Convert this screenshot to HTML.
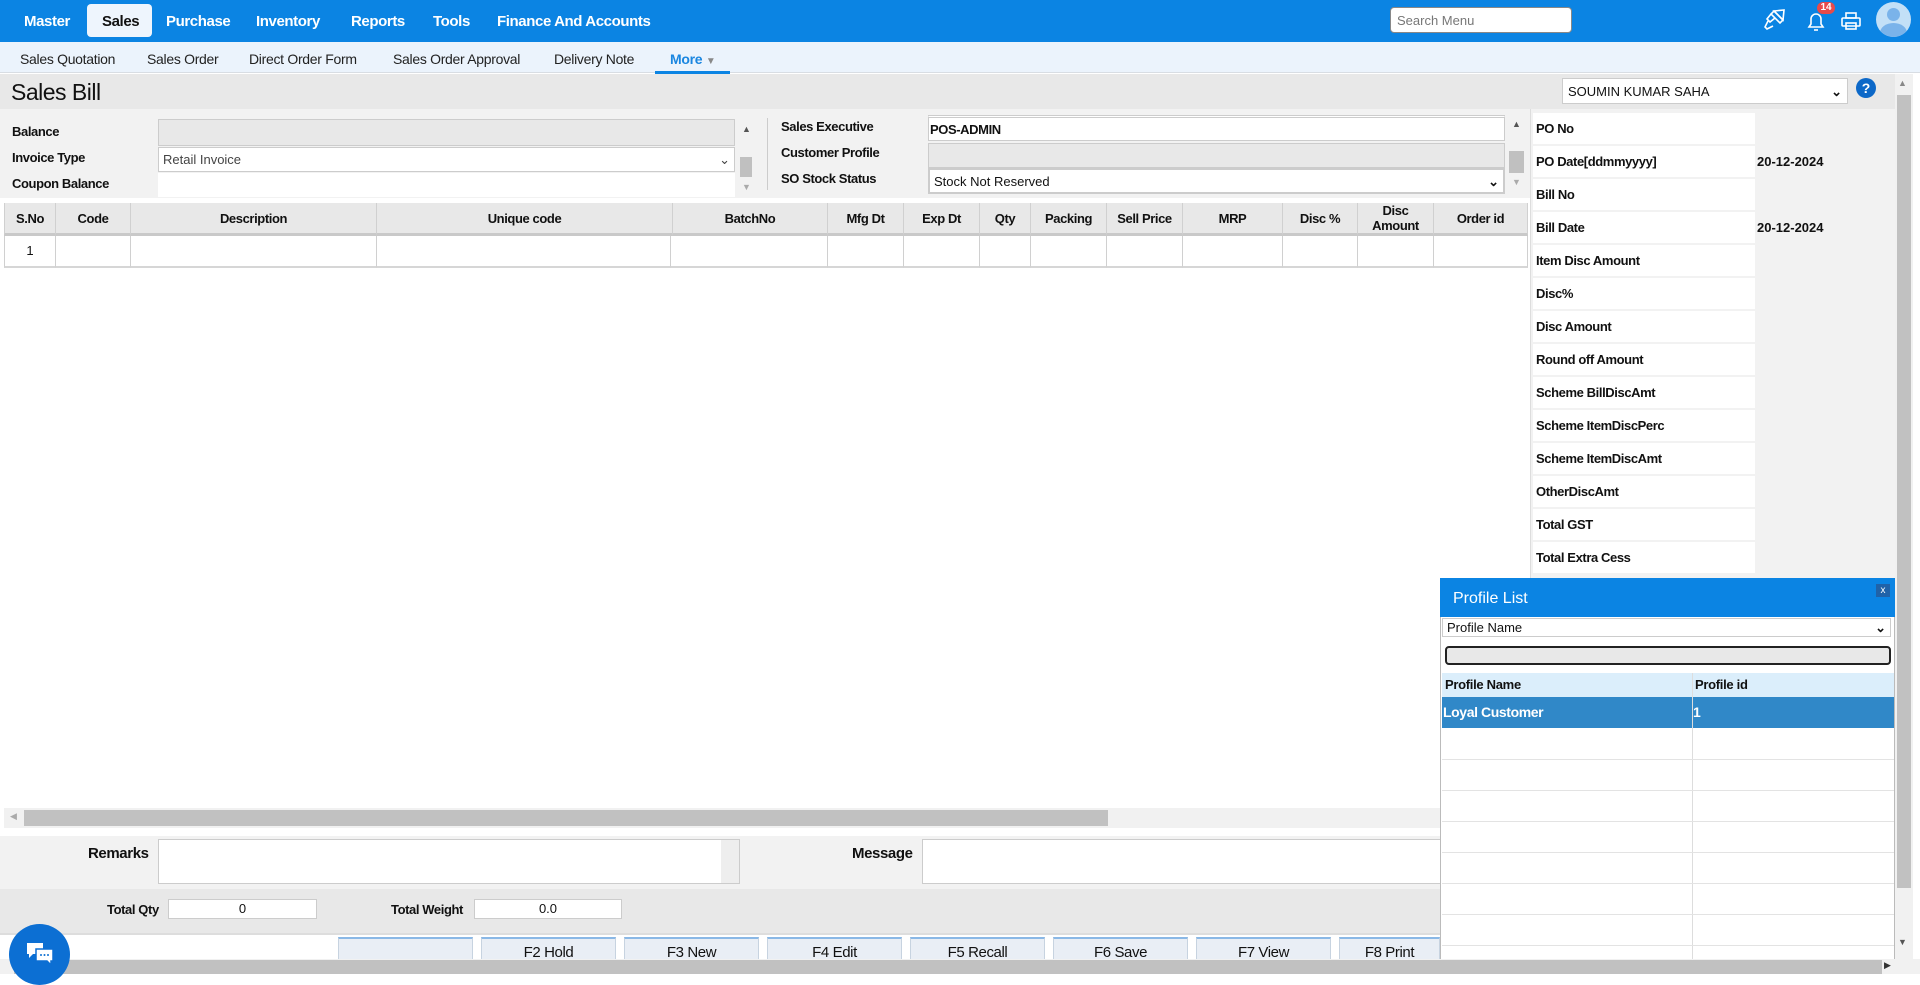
<!DOCTYPE html>
<html><head><meta charset="utf-8">
<style>
*{box-sizing:border-box;margin:0;padding:0}
body{width:1920px;height:974px;overflow:hidden;background:#fff;font-family:"Liberation Sans",sans-serif;position:relative;color:#111}
.a{position:absolute}
.top{left:0;top:0;width:1920px;height:42px;background:#0b84e3}
.nav{top:13px;color:#fff;font-weight:bold;font-size:15px;letter-spacing:-0.4px}
.sub{left:0;top:42px;width:1920px;height:31px;background:#ebf3fc;border-bottom:1px solid #d8dde3}
.sn{top:51px;font-size:14px;color:#222;letter-spacing:-0.3px}
.lbl{font-size:13px;font-weight:bold;letter-spacing:-0.4px}
.th{position:absolute;top:203px;height:33px;border-right:1px solid #d0d0d0;font-size:13px;font-weight:bold;text-align:center;display:flex;align-items:center;justify-content:center;letter-spacing:-0.4px;line-height:15px;background:#e8e8e8;border-bottom:3px solid #c9c9c9}
.td{position:absolute;top:236px;height:32px;border-right:1px solid #d0d0d0;border-bottom:2px solid #d6d6d6;background:#fff}
.rp{position:absolute;left:1533px;width:222px;height:31px;background:#fff;font-size:13px;font-weight:bold;letter-spacing:-0.4px;padding-left:3px;line-height:31px}
.rv{position:absolute;left:1755px;width:140px;height:31px;background:#f2f2f2;font-size:13px;font-weight:bold;line-height:31px;padding-left:2px}
.btn{position:absolute;top:937px;width:135px;height:30px;background:#e9eef5;border:1px solid #c7d3e0;border-top:2px solid #8ab8e6;font-size:15px;text-align:center;padding-top:5px;letter-spacing:-0.4px}
</style></head><body>
<div class="a top"></div>
<div class="a" style="left:87px;top:4px;width:65px;height:33px;background:#eef5fd;border-radius:4px"></div>
<div class="a nav" style="left:24px">Master</div>
<div class="a nav" style="left:102px;color:#111">Sales</div>
<div class="a nav" style="left:166px">Purchase</div>
<div class="a nav" style="left:256px">Inventory</div>
<div class="a nav" style="left:351px">Reports</div>
<div class="a nav" style="left:433px">Tools</div>
<div class="a nav" style="left:497px">Finance And Accounts</div>
<div class="a" style="left:1390px;top:7px;width:182px;height:26px;background:#fff;border:1px solid #888;border-radius:4px;font-size:13px;color:#777;padding:5px 6px">Search Menu</div>
<svg class="a" style="left:1762px;top:8px" width="26" height="24" viewBox="0 0 26 24" fill="none" stroke="#fff" stroke-width="1.6"><path d="M12 3l10 -1 -1 10z"/><path d="M12 3l9 9-3 3-9-9z"/><path d="M9 6l-4 5 3 3 5-4"/><path d="M6 13l-3 6 2 2 6-3"/></svg>
<svg class="a" style="left:1805px;top:9px" width="22" height="24" viewBox="0 0 22 24" fill="none" stroke="#fff" stroke-width="1.6"><path d="M4 18h14l-2-3v-5a5 5 0 0 0-10 0v5z"/><path d="M9 21h4"/></svg>
<div class="a" style="left:1817px;top:2px;width:18px;height:12px;background:#e84a4a;border-radius:6px;color:#fff;font-size:10px;font-weight:bold;text-align:center;line-height:12px">14</div>
<svg class="a" style="left:1840px;top:10px" width="22" height="22" viewBox="0 0 22 22" fill="none" stroke="#fff" stroke-width="1.6"><rect x="6" y="3" width="10" height="5"/><rect x="2" y="8" width="18" height="8" rx="1"/><rect x="6" y="13" width="10" height="6"/></svg>
<div class="a" style="left:1876px;top:2px;width:35px;height:35px;border-radius:50%;background:#c3e0f7;overflow:hidden"><div class="a" style="left:11px;top:6px;width:13px;height:13px;border-radius:50%;background:#7ab3ea"></div><div class="a" style="left:4px;top:21px;width:27px;height:20px;border-radius:50%;background:#7ab3ea"></div></div>

<div class="a sub"></div>
<div class="a sn" style="left:20px">Sales Quotation</div>
<div class="a sn" style="left:147px">Sales Order</div>
<div class="a sn" style="left:249px">Direct Order Form</div>
<div class="a sn" style="left:393px">Sales Order Approval</div>
<div class="a sn" style="left:554px">Delivery Note</div>
<div class="a sn" style="left:670px;color:#1a86e0;font-weight:bold">More <span style="font-size:10px;color:#888">▼</span></div>
<div class="a" style="left:655px;top:71px;width:75px;height:3px;background:#0b84e3"></div>

<div class="a" style="left:0;top:74px;width:1895px;height:35px;background:#e8e8e8"></div>
<div class="a" style="left:11px;top:79px;font-size:23px;letter-spacing:-0.5px">Sales Bill</div>
<div class="a" style="left:1562px;top:78px;width:286px;height:26px;background:#fff;border:1px solid #ccc;font-size:13px;padding:5px 5px">SOUMIN KUMAR SAHA<span style="float:right;font-weight:bold">⌄</span></div>
<div class="a" style="left:1856px;top:78px;width:20px;height:20px;border-radius:50%;background:#0c68c8;color:#fff;font-weight:bold;font-size:14px;text-align:center;line-height:20px">?</div>

<div class="a" style="left:0;top:109px;width:1530px;height:90px;background:#f2f2f2"></div>
<div class="a lbl" style="left:12px;top:124px">Balance</div>
<div class="a lbl" style="left:12px;top:150px">Invoice Type</div>
<div class="a lbl" style="left:12px;top:176px">Coupon Balance</div>
<div class="a" style="left:158px;top:119px;width:577px;height:27px;background:#e8e8e8;border:1px solid #ccc"></div>
<div class="a" style="left:158px;top:147px;width:577px;height:25px;background:#fff;border:1px solid #ccc;font-size:13px;color:#444;padding:4px 4px">Retail Invoice<span style="float:right">⌄</span></div>
<div class="a" style="left:158px;top:173px;width:577px;height:24px;background:#fff"></div>
<div class="a" style="left:742px;top:124px;font-size:9px;color:#555">▲</div>
<div class="a" style="left:740px;top:157px;width:12px;height:20px;background:#c0c0c0"></div>
<div class="a" style="left:742px;top:182px;font-size:9px;color:#aaa">▼</div>
<div class="a" style="left:767px;top:118px;width:1px;height:72px;background:#ccc"></div>
<div class="a lbl" style="left:781px;top:119px">Sales Executive</div>
<div class="a lbl" style="left:781px;top:145px">Customer Profile</div>
<div class="a lbl" style="left:781px;top:171px">SO Stock Status</div>
<div class="a" style="left:928px;top:115px;width:577px;height:26px;background:#fff;border:1px solid #ccc;border-top:3px double #ccc;font-size:13px;padding:4px 1px;font-weight:bold;letter-spacing:-0.4px">POS-ADMIN</div>
<div class="a" style="left:928px;top:143px;width:577px;height:25px;background:#e8e8e8;border:1px solid #ccc"></div>
<div class="a" style="left:928px;top:168px;width:577px;height:26px;background:#fff;border:2px solid #ccc;font-size:13px;padding:4px 4px">Stock Not Reserved<span style="float:right;font-weight:bold">⌄</span></div>
<div class="a" style="left:1512px;top:119px;font-size:9px;color:#555">▲</div>
<div class="a" style="left:1509px;top:151px;width:15px;height:22px;background:#c0c0c0"></div>
<div class="a" style="left:1512px;top:177px;font-size:9px;color:#aaa">▼</div>

<div class="a" style="left:0;top:198px;width:1530px;height:6px;background:#fff"></div>
<div class="th" style="left:4px;width:52px;border-left:1px solid #d0d0d0">S.No</div>
<div class="th" style="left:56px;width:75px">Code</div>
<div class="th" style="left:131px;width:246px">Description</div>
<div class="th" style="left:377px;width:296px">Unique code</div>
<div class="th" style="left:673px;width:155px">BatchNo</div>
<div class="th" style="left:828px;width:76px">Mfg Dt</div>
<div class="th" style="left:904px;width:76px">Exp Dt</div>
<div class="th" style="left:980px;width:51px">Qty</div>
<div class="th" style="left:1031px;width:76px">Packing</div>
<div class="th" style="left:1107px;width:76px">Sell Price</div>
<div class="th" style="left:1183px;width:100px">MRP</div>
<div class="th" style="left:1283px;width:75px">Disc %</div>
<div class="th" style="left:1358px;width:76px">Disc<br>Amount</div>
<div class="th" style="left:1434px;width:94px">Order id</div>
<div class="td" style="left:4px;width:52px;border-left:1px solid #d0d0d0;font-size:13px;text-align:center;line-height:30px">1</div>
<div class="td" style="left:56px;width:75px"></div>
<div class="td" style="left:131px;width:246px"></div>
<div class="td" style="left:377px;width:294px"></div>
<div class="td" style="left:671px;width:157px"></div>
<div class="td" style="left:828px;width:76px"></div>
<div class="td" style="left:904px;width:76px"></div>
<div class="td" style="left:980px;width:51px"></div>
<div class="td" style="left:1031px;width:76px"></div>
<div class="td" style="left:1107px;width:76px"></div>
<div class="td" style="left:1183px;width:100px"></div>
<div class="td" style="left:1283px;width:75px"></div>
<div class="td" style="left:1358px;width:76px"></div>
<div class="td" style="left:1434px;width:94px"></div>

<div class="a" style="left:1530px;top:109px;width:2px;height:470px;background:#ddd"></div>
<div class="a" style="left:1531px;top:109px;width:364px;height:470px;background:#f2f2f2"></div>
<div class="rp" style="top:113px">PO No</div><div class="rv" style="top:113px"></div>
<div class="rp" style="top:146px">PO Date[ddmmyyyy]</div><div class="rv" style="top:146px">20-12-2024</div>
<div class="rp" style="top:179px">Bill No</div><div class="rv" style="top:179px"></div>
<div class="rp" style="top:212px">Bill Date</div><div class="rv" style="top:212px">20-12-2024</div>
<div class="rp" style="top:245px">Item Disc Amount</div><div class="rv" style="top:245px"></div>
<div class="rp" style="top:278px">Disc%</div><div class="rv" style="top:278px"></div>
<div class="rp" style="top:311px">Disc Amount</div><div class="rv" style="top:311px"></div>
<div class="rp" style="top:344px">Round off Amount</div><div class="rv" style="top:344px"></div>
<div class="rp" style="top:377px">Scheme BillDiscAmt</div><div class="rv" style="top:377px"></div>
<div class="rp" style="top:410px">Scheme ItemDiscPerc</div><div class="rv" style="top:410px"></div>
<div class="rp" style="top:443px">Scheme ItemDiscAmt</div><div class="rv" style="top:443px"></div>
<div class="rp" style="top:476px">OtherDiscAmt</div><div class="rv" style="top:476px"></div>
<div class="rp" style="top:509px">Total GST</div><div class="rv" style="top:509px"></div>
<div class="rp" style="top:542px">Total Extra Cess</div><div class="rv" style="top:542px"></div>

<div class="a" style="left:1895px;top:74px;width:18px;height:886px;background:#f1f1f1"></div>
<div class="a" style="left:1898px;top:78px;font-size:9px;color:#888">▲</div>
<div class="a" style="left:1897px;top:95px;width:14px;height:793px;background:#c1c1c1"></div>
<div class="a" style="left:1898px;top:937px;font-size:9px;color:#555">▼</div>

<div class="a" style="left:4px;top:808px;width:1526px;height:20px;background:#f1f1f1"></div>
<div class="a" style="left:24px;top:810px;width:1084px;height:16px;background:#c1c1c1"></div>
<div class="a" style="left:10px;top:811px;font-size:9px;color:#aaa">◀</div>

<div class="a" style="left:0;top:836px;width:1440px;height:53px;background:#f2f2f2"></div>
<div class="a lbl" style="left:88px;top:845px;font-size:15px;font-weight:bold">Remarks</div>
<div class="a" style="left:158px;top:839px;width:582px;height:45px;background:#fff;border:1px solid #ccc"></div>
<div class="a" style="left:721px;top:840px;width:18px;height:43px;background:#eee"></div>
<div class="a" style="left:852px;top:845px;font-size:15px;font-weight:bold;letter-spacing:-0.4px">Message</div>
<div class="a" style="left:922px;top:839px;width:520px;height:45px;background:#fff;border:1px solid #ccc"></div>
<div class="a" style="left:0;top:889px;width:1440px;height:44px;background:#e8e8e8"></div>
<div class="a lbl" style="left:107px;top:902px">Total Qty</div>
<div class="a" style="left:168px;top:899px;width:149px;height:20px;background:#fff;border:1px solid #ccc;font-size:13px;text-align:center;line-height:18px">0</div>
<div class="a lbl" style="left:391px;top:902px">Total Weight</div>
<div class="a" style="left:474px;top:899px;width:148px;height:20px;background:#fff;border:1px solid #ccc;font-size:13px;text-align:center;line-height:18px">0.0</div>
<div class="a" style="left:0;top:933px;width:1440px;height:2px;background:#ddd"></div>
<div class="btn" style="left:338px"></div>
<div class="btn" style="left:481px">F2 Hold</div>
<div class="btn" style="left:624px">F3 New</div>
<div class="btn" style="left:767px">F4 Edit</div>
<div class="btn" style="left:910px">F5 Recall</div>
<div class="btn" style="left:1053px">F6 Save</div>
<div class="btn" style="left:1196px">F7 View</div>
<div class="btn" style="left:1339px;width:101px">F8 Print</div>

<div class="a" style="left:1440px;top:578px;width:455px;height:396px;background:#fff;border:1px solid #bbb"></div>
<div class="a" style="left:1440px;top:578px;width:455px;height:39px;background:#0b84e3;color:#fff;font-size:16px;padding:12px 13px">Profile List</div>
<div class="a" style="left:1876px;top:584px;width:14px;height:13px;background:#2062a8;color:#fff;font-size:10px;text-align:center;line-height:13px">x</div>
<div class="a" style="left:1442px;top:618px;width:449px;height:19px;border:1px solid #ccc;font-size:13px;padding:1px 4px">Profile Name<span style="float:right;font-weight:bold">⌄</span></div>
<div class="a" style="left:1445px;top:646px;width:446px;height:19px;background:#e8e8e8;border:2px solid #222;border-radius:4px"></div>
<div class="a" style="left:1442px;top:673px;width:452px;height:24px;background:#dbeefb;font-size:13px;font-weight:bold;letter-spacing:-0.3px;line-height:24px"><span class="a" style="left:3px">Profile Name</span><span class="a" style="left:253px">Profile id</span></div>
<div class="a" style="left:1442px;top:697px;width:452px;height:31px;background:#3088c8;color:#fff;font-size:14px;font-weight:bold;letter-spacing:-0.4px;line-height:31px"><span class="a" style="left:1px">Loyal Customer</span><span class="a" style="left:251px">1</span></div>
<div class="a" style="left:1692px;top:673px;width:1px;height:301px;background:#ddd"></div>
<div class="a" style="left:1442px;top:759px;width:452px;height:1px;background:#e3e3e3"></div>
<div class="a" style="left:1442px;top:790px;width:452px;height:1px;background:#e3e3e3"></div>
<div class="a" style="left:1442px;top:821px;width:452px;height:1px;background:#e3e3e3"></div>
<div class="a" style="left:1442px;top:852px;width:452px;height:1px;background:#e3e3e3"></div>
<div class="a" style="left:1442px;top:883px;width:452px;height:1px;background:#e3e3e3"></div>
<div class="a" style="left:1442px;top:914px;width:452px;height:1px;background:#e3e3e3"></div>
<div class="a" style="left:1442px;top:945px;width:452px;height:1px;background:#e3e3e3"></div>

<div class="a" style="left:0;top:959px;width:1920px;height:15px;background:#f1f1f1"></div>
<div class="a" style="left:14px;top:960px;width:1868px;height:14px;background:#c1c1c1"></div>
<div class="a" style="left:1884px;top:960px;font-size:9px;color:#333">▶</div>
<div class="a" style="left:9px;top:924px;width:61px;height:61px;border-radius:50%;background:#0c6fd3"></div>
<svg class="a" style="left:24px;top:940px" width="32" height="30" viewBox="0 0 32 30"><path d="M3 3h16v11H9l-4 4v-4H3z" fill="#fff"/><path d="M12 9h17v12h-2v4l-4-4H12z" fill="#fff" stroke="#0c6fd3" stroke-width="1.5"/><circle cx="17" cy="15" r="1" fill="#0c6fd3"/><circle cx="20.5" cy="15" r="1" fill="#0c6fd3"/><circle cx="24" cy="15" r="1" fill="#0c6fd3"/></svg>
</body></html>
